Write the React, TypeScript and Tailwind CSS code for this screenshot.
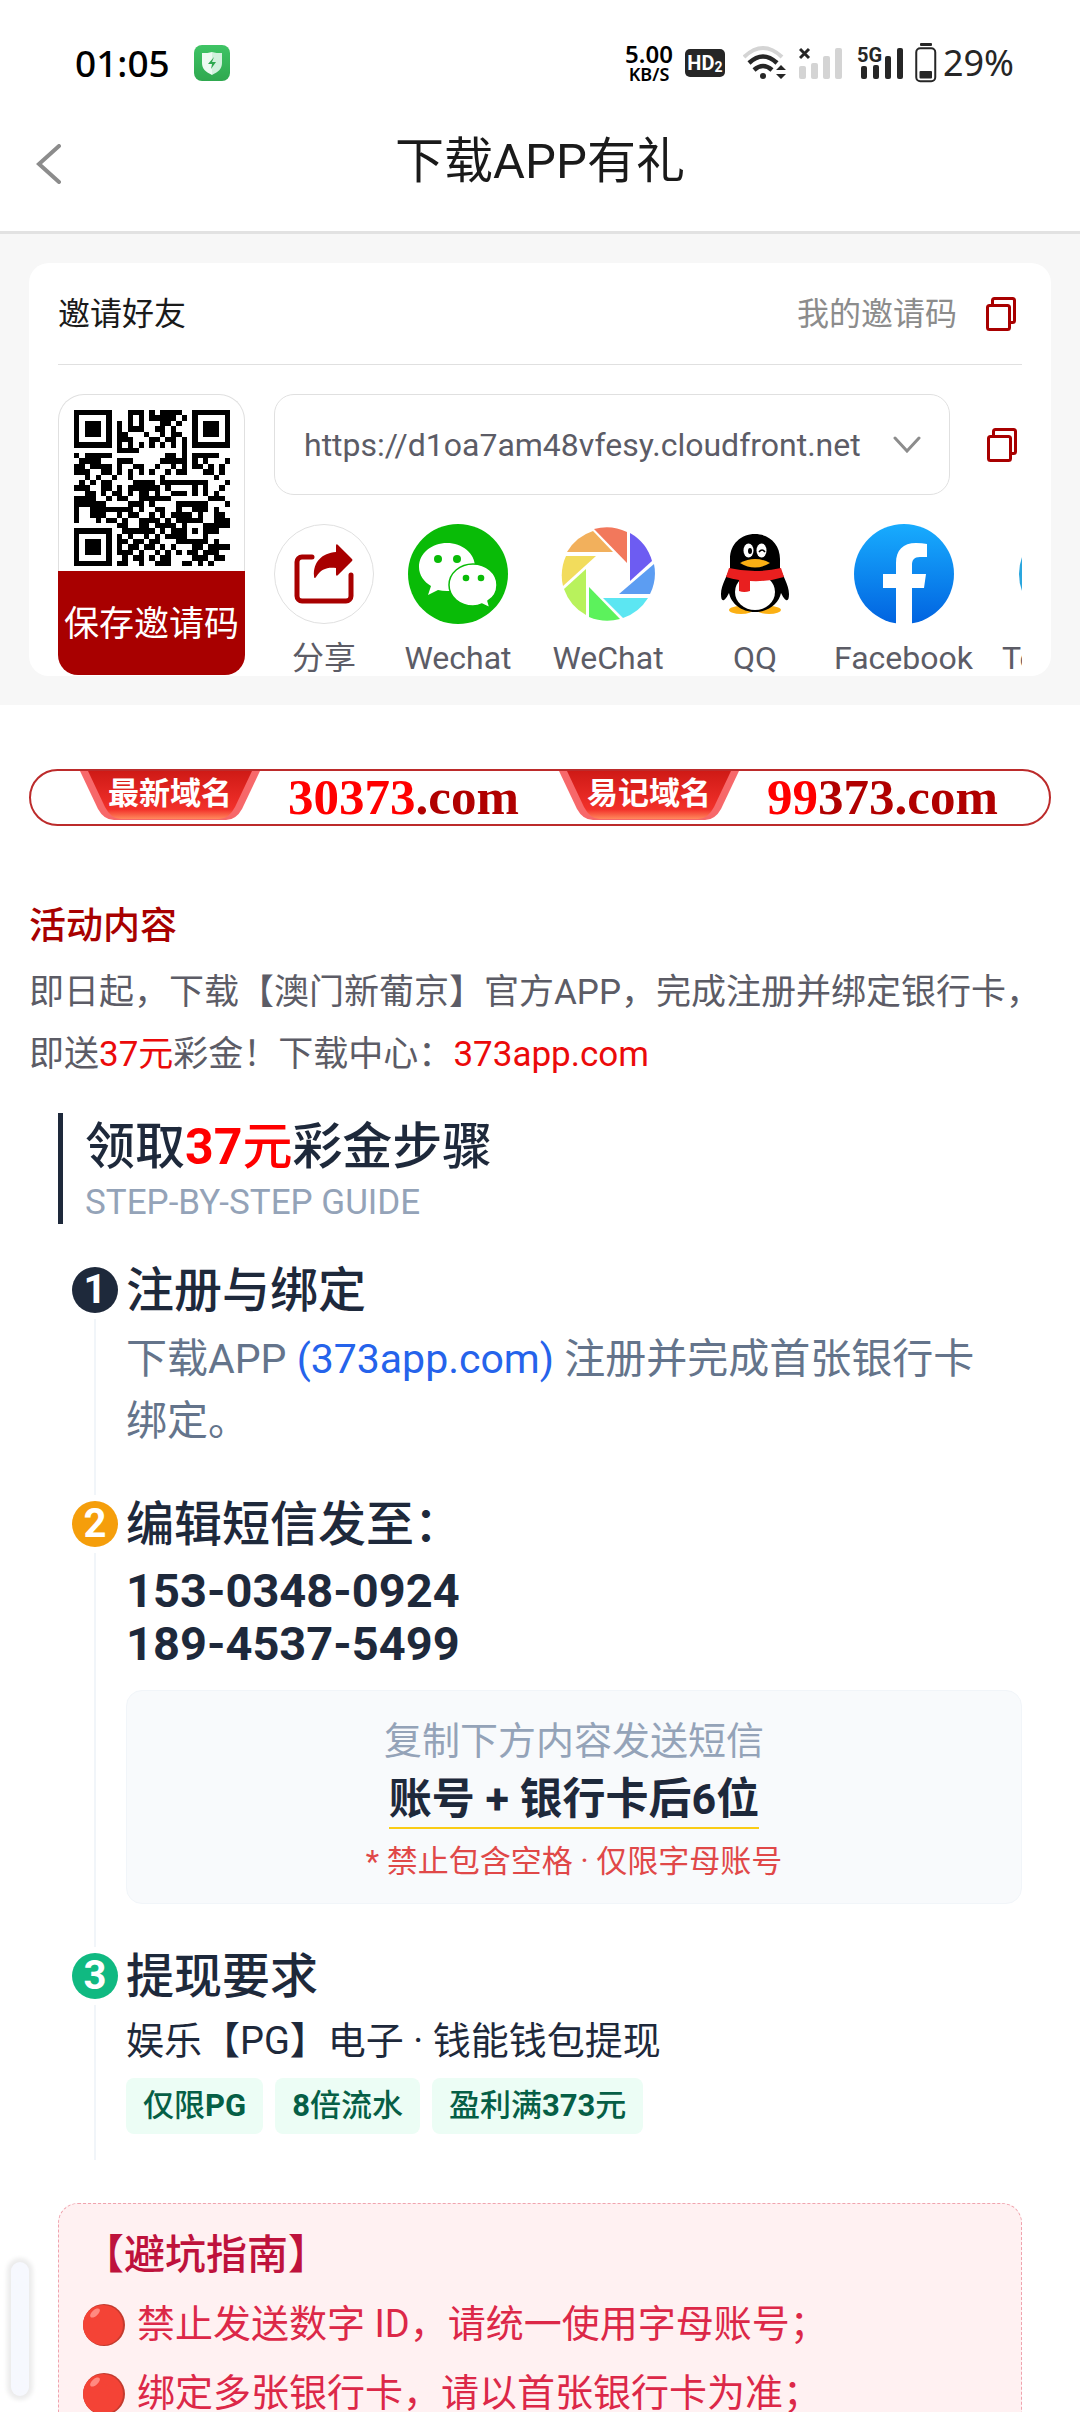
import type { ReactNode } from "react";

// Dark modules of the invite code, one string per row.
const QR_ROWS = [
  "11111110001110101111001111111",
  "10000010001010111110101000001",
  "10111010101010001101001011101",
  "10111010101110011010001011101",
  "10111010110001001011001011101",
  "10000010111000110110101000001",
  "11111110101010101010101111111",
  "00000000111100000000100000000",
  "10111110000000000110101111100",
  "01111000111000001111101010001",
  "11011110100110010010101101010",
  "11100110101010100101100011010",
  "00101001001000001000000000100",
  "01010110000111101111111110001",
  "11100110101111110100001010010",
  "00110101101011010011101010100",
  "11110010110011111100000001110",
  "11111100001110100001111110001",
  "10011111111010011001001110100",
  "10011100101100101011110100110",
  "10001011010011110101111100111",
  "00000000110011011110100011111",
  "11111110011111101011101011100",
  "10000010101001010111100010000",
  "10111010110110110001111110100",
  "10111010101101101010001101111",
  "10111010111010010101011011100",
  "10000010010110101100001110110",
  "11111110110010011100110101000",
];

const APP_LINK = "https://d1oa7am48vfesy.cloudfront.net";

function QrCode() {
  return (
    <svg
      viewBox="0 0 29 29"
      className="h-[156px] w-[156px]"
      shapeRendering="crispEdges"
      role="img"
      aria-label="邀请二维码"
    >
      {QR_ROWS.map((row, y) =>
        row
          .split("")
          .map((cell, x) =>
            cell === "1" ? (
              <rect key={`${x}-${y}`} x={x} y={y} width="1" height="1" />
            ) : null,
          ),
      )}
    </svg>
  );
}

function CopyIcon() {
  return (
    <svg
      viewBox="0 0 30 34"
      className="h-[34px] w-[30px]"
      fill="none"
      stroke="#a80000"
      strokeWidth="3"
      strokeLinejoin="round"
    >
      <rect x="1.5" y="8.5" width="22" height="24" rx="2" />
      <path d="M6.500 8V3.500a2 2 0 0 1 2-2h18a2 2 0 0 1 2 2v20a2 2 0 0 1-2 2H24" />
    </svg>
  );
}

function ShareIcon() {
  return (
    <svg viewBox="0 0 100 100" className="h-[100px] w-[100px]">
      <circle cx="50" cy="50" r="49.500" fill="#fff" stroke="#e0e0e0" />
      <path
        d="M38 33H28a5 5 0 0 0-5 5v34a5 5 0 0 0 5 5h44a5 5 0 0 0 5-5V51"
        fill="none"
        stroke="#a80000"
        strokeWidth="5"
        strokeLinecap="round"
      />
      <path
        d="M62 22c0-2 1-2 2-1l14 14q1 1 0 2L64 51c-1 1-2 1-2-1v-6c-9-1-15 1-20 9-1 2-2 1-2-1-1-14 8-23 22-24z"
        fill="#a80000"
      />
    </svg>
  );
}

function WechatIcon() {
  return (
    <svg viewBox="0 0 100 100" className="h-[100px] w-[100px]">
      <circle cx="50" cy="50" r="50" fill="#09bb07" />
      <path
        d="M39 19c15 0 28 10 28 24S54 67 39 67q-5 0-9-1l-10 5 3-9C16 58 11 51 11 43c0-14 13-24 28-24z"
        fill="#fff"
      />
      <path
        d="M65 40c13 0 24 9 24 21 0 7-4 13-9 16l2 7-8-4q-4 2-9 2c-13 0-24-9-24-21s11-21 24-21z"
        fill="#fff"
        stroke="#09bb07"
        strokeWidth="1.500"
      />
      <g fill="#09bb07">
        <circle cx="30" cy="35" r="4" />
        <circle cx="49" cy="35" r="4" />
        <circle cx="58" cy="54" r="3.300" />
        <circle cx="73" cy="54" r="3.300" />
      </g>
    </svg>
  );
}

function MomentsIcon() {
  return (
    <svg viewBox="0 0 94 94" className="h-[94px] w-[94px]">
      <path d="M33 2A47 47 0 0 1 66 5V36z" fill="#f2785c" />
      <path d="M69 6A47 47 0 0 1 91 34L69 54z" fill="#6d5cf2" />
      <path d="M93 37A47 47 0 0 1 89 67H58z" fill="#5c9df2" />
      <path d="M87 71A47 47 0 0 1 62 91L42 71z" fill="#5ce6f2" />
      <path d="M59 92A47 47 0 0 1 28 90V60z" fill="#5cf25c" />
      <path d="M25 88A47 47 0 0 1 3 62L25 42z" fill="#b8f25c" />
      <path d="M2 59A47 47 0 0 1 5 29H35z" fill="#f2dc5c" />
      <path d="M6 25A47 47 0 0 1 32 4L52 25z" fill="#f2b05c" />
    </svg>
  );
}

function QqIcon() {
  return (
    <svg viewBox="0 0 68 80" className="h-[80px] w-[68px]">
      <ellipse cx="20" cy="76" rx="12" ry="4" fill="#fbb014" />
      <ellipse cx="48" cy="76" rx="12" ry="4" fill="#fbb014" />
      <path
        d="M34 0C48 0 59 10 59 25v9c2 6 9 17 9 26 0 5-1 7-3 6-2-1-4-5-5-7-2 10-12 19-26 19S10 69 8 59c-1 2-3 6-5 7-2 1-3-1-3-6 0-9 7-20 9-26v-9C9 10 20 0 34 0z"
        fill="#000"
      />
      <ellipse cx="34" cy="58" rx="20" ry="18" fill="#fff" />
      <ellipse cx="27.500" cy="16.500" rx="5" ry="7" fill="#fff" />
      <ellipse cx="40.500" cy="16.500" rx="5" ry="7" fill="#fff" />
      <ellipse cx="29" cy="17" rx="2" ry="3" fill="#000" />
      <path d="M38 18q3-4 6 0" fill="none" stroke="#000" strokeWidth="1.500" />
      <path d="M19 29q15-8 30 0-15 9-30 0z" fill="#fbb014" />
      <path
        d="M8 34q26 6 52 0l3 9q-16 5-34 4v10q-6 2-11 0V46Q11 45 5 43z"
        fill="#e91f1f"
      />
    </svg>
  );
}

function FacebookIcon() {
  return (
    <svg viewBox="0 0 100 100" className="h-[100px] w-[100px]">
      <defs>
        <linearGradient id="fb" x1="0" y1="0" x2="0" y2="1">
          <stop offset="0" stopColor="#18acfe" />
          <stop offset="1" stopColor="#0163e0" />
        </linearGradient>
      </defs>
      <circle cx="50" cy="50" r="50" fill="url(#fb)" />
      <path
        d="M42 100V64H29V50h13V39c0-13 7-20 20-20q6 0 11 1v13h-7c-6 0-8 3-8 8v9h14l-2 14H58v36z"
        fill="#fff"
      />
    </svg>
  );
}

function TelegramIcon() {
  return (
    <svg viewBox="0 0 100 100" className="h-[100px] w-[100px]">
      <circle cx="50" cy="50" r="50" fill="#2aa6de" />
      <path d="M20 49l56-22-9 46-18-13-9 9-3-15z" fill="#fff" />
    </svg>
  );
}

const apps = [
  { label: "分享", icon: <ShareIcon />, width: "w-[100px]" },
  { label: "Wechat", icon: <WechatIcon />, width: "w-[110px]" },
  { label: "WeChat", icon: <MomentsIcon />, width: "w-[132px]" },
  { label: "QQ", icon: <QqIcon />, width: "w-[104px]" },
  { label: "Facebook", icon: <FacebookIcon />, width: "w-[135px]" },
  { label: "Telegram", icon: <TelegramIcon />, width: "w-[137px]" },
];

function StatusBar() {
  return (
    <div className="flex h-[92px] items-center justify-between pt-[34px] pr-[66px] pl-[75px] font-['Noto_Sans',sans-serif] text-[#262626]">
      <div className="flex items-center gap-6">
        <span className="text-[37px] leading-10 font-medium text-black">
          01:05
        </span>
        <svg viewBox="0 0 36 36" className="h-9 w-9">
          <defs>
            <linearGradient id="guard" x1="0" y1="0" x2="0" y2="1">
              <stop offset="0" stopColor="#3fc465" />
              <stop offset="1" stopColor="#2fa84f" />
            </linearGradient>
          </defs>
          <rect width="36" height="36" rx="8" fill="url(#guard)" />
          <path d="M18 7c3 1 6 1 10 1v10c0 6-4 9-10 12z" fill="#d3f1de" />
          <path d="M18 7c-3 1-6 1-10 1v10c0 6 4 9 10 12z" fill="#eefaf2" />
          <path d="M20 12l-6 7h4l-1 5 5-7h-4z" fill="#2fa84f" />
        </svg>
      </div>
      <div className="flex items-center">
        <div className="flex flex-col items-center text-black">
          <span className="text-[24px] leading-[22px] font-semibold">5.00</span>
          <span className="text-[18px] leading-[18px] font-semibold">KB/S</span>
        </div>
        <span className="ml-3 flex h-7 w-10 items-center justify-center rounded-[5px] bg-[#262626] font-[Roboto,sans-serif] text-[20px] leading-7 font-bold text-white">
          HD<span className="pt-2 text-[14px]">2</span>
        </span>
        <svg viewBox="0 0 44 36" className="ml-[18px] h-9 w-11" fill="none">
          <path d="M1 12q19-18 38 0" stroke="#d4d4d4" strokeWidth="4" />
          <path d="M6 18q14-13 28 0" stroke="#262626" strokeWidth="4.500" />
          <path d="M11 25q9-8 18 0" stroke="#262626" strokeWidth="4.500" />
          <circle cx="20" cy="31" r="3" fill="#262626" />
          <path d="M38 20l5 5H33zM33 29h10l-5 5z" fill="#262626" />
        </svg>
        <svg viewBox="0 0 43 36" className="ml-3 h-9 w-[43px]">
          <path d="M1 4l9 9M10 4l-9 9" stroke="#262626" strokeWidth="3" />
          <g fill="#d4d4d4">
            <rect y="21" width="7" height="13" rx="2" />
            <rect x="12" y="18" width="7" height="16" rx="2" />
            <rect x="24" y="11" width="7" height="23" rx="2" />
            <rect x="36" y="3" width="7" height="31" rx="2" />
          </g>
        </svg>
        <svg
          viewBox="0 0 47 36"
          className="ml-[15px] h-9 w-[47px] overflow-visible"
        >
          <text
            x="0"
            y="17"
            fontSize="20"
            fontWeight="700"
            fontFamily="Roboto, sans-serif"
            fill="#262626"
          >
            5G
          </text>
          <g fill="#262626">
            <rect x="4" y="21" width="6" height="13" rx="2" />
            <rect x="16" y="20" width="6" height="14" rx="2" />
            <rect x="28" y="11" width="6" height="23" rx="2" />
            <rect x="40" y="3" width="6" height="31" rx="2" />
          </g>
        </svg>
        <svg viewBox="0 0 22 40" className="ml-[11px] h-10 w-[22px]">
          <rect x="5" width="12" height="3" rx="1" fill="#262626" />
          <rect
            x="1.250"
            y="5.250"
            width="19"
            height="33"
            rx="4"
            fill="none"
            stroke="#262626"
            strokeWidth="2"
          />
          <rect x="4.500" y="28" width="12.500" height="7.500" rx="1" fill="#262626" />
        </svg>
        <span className="ml-[6px] text-[36px] leading-10">29%</span>
      </div>
    </div>
  );
}

function DomainTag({ label, id }: { label: string; id: string }) {
  return (
    <span className="relative flex h-[50px] w-[180px] shrink-0 justify-center">
      <svg viewBox="0 0 180 50" className="absolute inset-0 h-[50px] w-[180px]">
        <defs>
          <linearGradient id={id} x1="0" y1="0" x2="0" y2="1">
            <stop offset="0" stopColor="#cf1a16" />
            <stop offset="0.800" stopColor="#f2302a" />
            <stop offset="1" stopColor="#ff8a5c" />
          </linearGradient>
        </defs>
        <path d="M0 0h180l-18 38q-6 11-16 11H34q-10 0-16-11z" fill="#f7686a" />
        <path
          d="M8 0h164l-17 36q-6 12-16 12H41q-10 0-16-12z"
          fill={`url(#${id})`}
        />
      </svg>
      <span className="relative text-[31px] leading-[46px] font-bold text-white">
        {label}
      </span>
    </span>
  );
}

function DomainBanner() {
  return (
    <div className="mt-16 flex h-[57px] items-start overflow-hidden rounded-full border-2 border-[#bc2b2b] pl-[49px]">
      <DomainTag label="最新域名" id="tag-new" />
      <a
        href="#30373"
        className="ml-7 w-[243px] shrink-0 font-['Liberation_Serif',serif] text-[51px] leading-[52px] font-bold whitespace-nowrap text-[#ff0000]"
      >
        30373<span className="text-[#b00000]">.com</span>
      </a>
      <span className="ml-7 flex">
        <DomainTag label="易记域名" id="tag-easy" />
      </span>
      <a
        href="#99373"
        className="ml-7 font-['Liberation_Serif',serif] text-[51px] leading-[52px] font-bold whitespace-nowrap text-[#ff0000]"
      >
        99<span className="text-[#b00000]">373.com</span>
      </a>
    </div>
  );
}

function InviteCard() {
  return (
    <section className="bg-[#f7f7f7] p-[29px]">
      <div className="overflow-hidden rounded-[20px] bg-white px-[29px]">
        <div className="flex h-[102px] items-center justify-between border-b border-[#e0e0e0] text-[32px] leading-9">
          <h2 className="text-[#1a1a1a]">邀请好友</h2>
          <button
            type="button"
            className="flex items-center gap-[29px] pr-[6px] text-[#8c8c8c]"
          >
            我的邀请码
            <CopyIcon />
          </button>
        </div>
        <div className="flex gap-[29px] pt-[29px]">
          <div className="flex w-[187px] shrink-0 flex-col">
            <div className="flex h-[177px] justify-center rounded-t-[26px] border border-b-0 border-[#e0e0e0] pt-[15px]">
              <QrCode />
            </div>
            <button
              type="button"
              className="h-[104px] rounded-b-[20px] bg-[#a80000] pt-1 text-[35px] whitespace-nowrap text-white"
            >
              保存邀请码
            </button>
          </div>
          <div className="min-w-0 flex-1">
            <div className="flex items-center gap-[37px] pr-[5px]">
              <div className="relative min-w-0 flex-1">
                <select
                  aria-label="下载链接"
                  className="h-[101px] w-full appearance-none rounded-[20px] border border-[#e0e0e0] bg-white pl-[29px] text-[32px] text-[#5c5c66]"
                >
                  <option>{APP_LINK}</option>
                </select>
                <svg
                  viewBox="0 0 28 17"
                  className="pointer-events-none absolute top-[42px] right-[29px] h-[17px] w-7"
                  fill="none"
                  stroke="#8c8c8c"
                  strokeWidth="3"
                  strokeLinecap="round"
                >
                  <path d="M2 2l12 13L26 2" />
                </svg>
              </div>
              <button type="button" aria-label="复制链接">
                <CopyIcon />
              </button>
            </div>
            <div className="mt-[29px] flex gap-[29px] overflow-hidden">
              {apps.map((app) => (
                <button
                  type="button"
                  key={app.label}
                  className={`flex shrink-0 flex-col items-center gap-4 ${app.width}`}
                >
                  <span className="flex h-[100px] items-center">
                    {app.icon}
                  </span>
                  <span className="text-[32px] leading-9 text-[#5c5c66]">
                    {app.label}
                  </span>
                </button>
              ))}
            </div>
          </div>
        </div>
      </div>
    </section>
  );
}

type StepProps = {
  number: number;
  color: string;
  title: string;
  padding: string;
  first?: boolean;
  children: ReactNode;
};

function Step({ number, color, title, padding, first, children }: StepProps) {
  return (
    <li className="flex gap-2">
      <div className="flex w-[46px] shrink-0 flex-col items-center gap-[6px]">
        <div className={`h-[3px] w-[2px] ${first ? "" : "bg-slate-100"}`} />
        <span
          className={`flex h-[46px] w-[46px] items-center justify-center rounded-full text-[40px] leading-[46px] font-bold text-white ${color}`}
        >
          {number}
        </span>
        <div className="w-[2px] flex-1 bg-slate-100" />
      </div>
      <div className={`min-w-0 flex-1 ${padding}`}>
        <h4 className="text-[48px] leading-[66px] font-medium">{title}</h4>
        {children}
      </div>
    </li>
  );
}

function Tag({ children }: { children: ReactNode }) {
  return (
    <span className="rounded-lg bg-emerald-50 px-[17px] text-[31px] leading-[56px] font-medium text-[#065f46]">
      {children}
    </span>
  );
}

function Steps() {
  return (
    <section className="mx-[29px] mt-[27px] text-[#1e293b]">
      <div className="border-l-[5px] border-[#1e293b] pl-[22px]">
        <h3 className="text-[50px] leading-[69px] font-medium">
          领取
          <span className="text-[#ff0000]">
            <b>37</b>元
          </span>
          彩金步骤
        </h3>
        <p className="text-[35px] leading-[42px] text-[#94a3b8]">
          STEP-BY-STEP GUIDE
        </p>
      </div>
      <ol className="mt-[34px] ml-[14px]">
        <Step
          number={1}
          color="bg-[#1e293b]"
          title="注册与绑定"
          padding="pb-10"
          first
        >
          <p className="mt-1 pr-5 text-[41px] leading-[62px] text-[#64748b]">
            下载APP{" "}
            <a href="#373app" className="text-[#2563eb]">
              (373app.com)
            </a>{" "}
            注册并完成首张银行卡绑定。
          </p>
        </Step>
        <Step
          number={2}
          color="bg-[#f59e0b]"
          title="编辑短信发至："
          padding="pb-10"
        >
          <p className="mt-[6px] text-[47px] leading-[53px] font-bold">
            153-0348-0924
            <br />
            189-4537-5499
          </p>
          <div className="mt-5 flex flex-col items-center rounded-2xl border border-slate-100 bg-slate-50 pt-[22px] pb-4">
            <p className="text-[38px] leading-[56px] text-[#94a3b8]">
              复制下方内容发送短信
            </p>
            <p className="border-b-2 border-[#facc15] pt-[2px] text-[43px] leading-[56px] font-bold">
              账号 + 银行卡后6位
            </p>
            <p className="mt-2 text-[31px] leading-[50px] text-[#e04848]">
              * 禁止包含空格 · 仅限字母账号
            </p>
          </div>
        </Step>
        <Step
          number={3}
          color="bg-[#10b981]"
          title="提现要求"
          padding="pb-[26px]"
        >
          <p className="mt-1 text-[38px] leading-[54px]">
            娱乐【PG】电子 · 钱能钱包提现
          </p>
          <div className="mt-[10px] flex gap-3">
            <Tag>
              仅限<b>PG</b>
            </Tag>
            <Tag>
              <b>8</b>倍流水
            </Tag>
            <Tag>
              盈利满<b>373</b>元
            </Tag>
          </div>
        </Step>
      </ol>
    </section>
  );
}

const warnings = [
  "禁止发送数字 ID，请统一使用字母账号；",
  "绑定多张银行卡，请以首张银行卡为准；",
];

function Warnings() {
  return (
    <section className="mx-[29px] mt-[43px] rounded-[20px] border border-dashed border-[#f0a3ae] bg-[#fff1f2] px-6 pt-5 pb-8">
      <h3 className="text-[41px] leading-[62px] font-medium text-[#be123c]">
        【避坑指南】
      </h3>
      <ul className="mt-1 text-[38px] leading-[69px] text-[#dc2848]">
        {warnings.map((text) => (
          <li key={text} className="flex items-center gap-3">
            <svg viewBox="0 0 42 42" className="h-[42px] w-[42px] shrink-0">
              <circle cx="21" cy="21" r="21" fill="#c33a2e" />
              <circle cx="20" cy="21" r="20" fill="#f44336" />
              <ellipse
                cx="12"
                cy="9"
                rx="6"
                ry="3"
                transform="rotate(-42 12 9)"
                fill="#ff8a80"
              />
            </svg>
            {text}
          </li>
        ))}
      </ul>
    </section>
  );
}

export default function App() {
  return (
    <div className="relative h-screen overflow-hidden bg-white font-[Roboto,'Noto_Sans_CJK_SC',sans-serif]">
      <StatusBar />
      <header className="flex h-[142px] items-center border-b-[3px] border-[#e2e2e2] px-9">
        <button type="button" aria-label="返回" className="pt-1">
          <svg
            viewBox="0 0 26 40"
            className="h-10 w-[26px]"
            fill="none"
            stroke="#8c8c8c"
            strokeWidth="4"
            strokeLinecap="round"
          >
            <path d="M23 2L3 20l20 18" />
          </svg>
        </button>
        <h1 className="flex-1 pr-[26px] text-center text-[49px] leading-[60px] text-[#1a1a1a]">
          下载APP有礼
        </h1>
      </header>
      <InviteCard />
      <main className="px-[29px]">
        <DomainBanner />
        <h2 className="mt-[70px] text-[37px] leading-[62px] font-medium text-[#a80000]">
          活动内容
        </h2>
        <p className="mt-1 text-[35px] leading-[62px] text-[#5c5c66]">
          即日起，下载【澳门新葡京】官方APP，完成注册并绑定银行卡，即送
          <span className="text-[#eb0a0a]">37元</span>彩金！下载中心：
          <a href="#373app" className="text-[#eb0a0a]">
            373app.com
          </a>
        </p>
        <Steps />
        <Warnings />
      </main>
      <div className="absolute bottom-4 left-[11px] h-[134px] w-[18px] rounded-full bg-[#f6f8fe] shadow-[0_0_4px_4px_#ececec]" />
    </div>
  );
}
